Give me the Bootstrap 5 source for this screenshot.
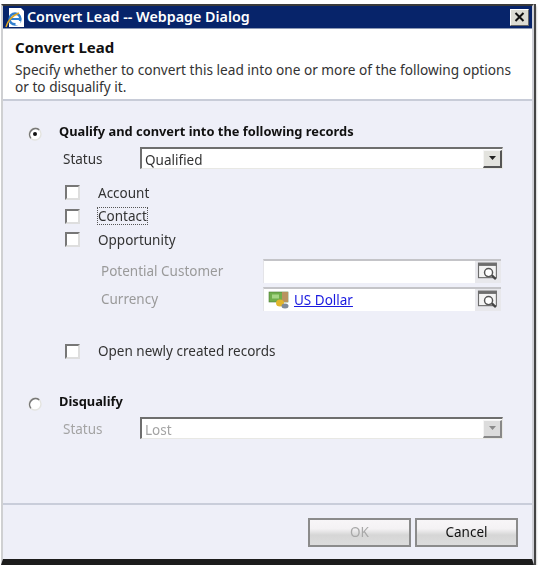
<!DOCTYPE html>
<html lang="en">
<head>
  <meta charset="UTF-8">
  <title>Convert Lead</title>
  <link href="https://cdn.jsdelivr.net/npm/bootstrap@5.3.2/dist/css/bootstrap.min.css" rel="stylesheet">
  <style>
    body {
      background: #fff;
      font-family: "Noto Sans", "DejaVu Sans", sans-serif;
      font-size: 13.5px;
      color: #333;
      line-height: 16px;
    }
    .dlg-window {
      width: 533px;
      height: 561px;
      margin: 4px 0 0 1px;
      background: #eeeff8;
      border-top: 2px solid #3a3a3a;
      border-right: 2px solid #cfd0d6;
      border-bottom: 6px solid #1c1c1c;
      border-left: 2px solid #cfd0d2;
      box-shadow: 2px 0 0 #444, 2px 2px 2px #999;
      filter: blur(.35px);
    }
    .dlg-title {
      height: 23px;
      background: #07246a;
      color: #fff;
      font-weight: 600;
      font-size: 14.3px;
      padding-left: 2px;
      padding-right: 3px;
      border-bottom: 1px solid #8d9ab5;
    }
    .dlg-title svg { margin-right: 1px; }
    .dlg-close {
      width: 19px;
      height: 17px;
      background: #dcdcd4;
      border: 1px solid #fff;
      border-right-color: #666;
      border-bottom-color: #666;
      color: #111;
    }
    .dlg-head {
      height: 72px;
      background: #fff;
      padding: 8px 12px 0;
      border-bottom: 2px solid #c8ccd8;
    }
    .dlg-head h1 {
      font-size: 15px;
      font-weight: 700;
      color: #111;
      line-height: 20px;
      margin: 0 0 5px;
    }
    .dlg-head p {
      margin: 0;
      line-height: 16.5px;
      font-size: 13.65px;
    }
    .dlg-body {
      height: 404px;
      padding: 20px 29px 0 25px;
      border-bottom: 2px solid #c9cdda;
    }
    .opt-head {
      font-weight: 700;
      font-size: 12.85px;
      color: #111;
      height: 20px;
    }
    .radio-mark {
      width: 14px;
      height: 14px;
      margin-top: 6px;
      margin-right: 17px;
      flex: none;
    }
    .field-row {
      padding-left: 35px;
      height: 22px;
      margin-top: 6px;
    }
    .field-name { width: 77px; flex: none; padding-top: 1px; }
    .muted-text { color: #a4a4a4; }
    .drop-box {
      width: 363px;
      height: 22px;
      flex: none;
      background: #fff;
      border: 2px solid #6e6e6e;
      border-right: 1px solid #e8e8e4;
      border-bottom: 1px solid #e8e8e4;
      padding-left: 3px;
    }
    .drop-box > span { padding-top: 3px; }
    .drop-arrow {
      width: 19px;
      height: 18px;
      margin-left: auto;
      background: #e3e3de;
      border: 1px solid #f5f5f5;
      border-right: 2px solid #555;
      border-bottom: 2px solid #555;
    }
    .drop-arrow.is-off {
      border-right-color: #888;
      border-bottom-color: #888;
      background: #dcdcdc;
    }
    .tick-list { margin-top: 12px; }
    .tick-row {
      padding-left: 37px;
      height: 23.5px;
    }
    .tick-box {
      width: 15px;
      height: 15px;
      margin-right: 18px;
      background: #fff;
      border: 2px solid #777;
      border-right-color: #dedede;
      border-bottom-color: #dedede;
      flex: none;
    }
    .dot-focus { outline: 1px dotted #555; }
    .lookup-list { margin-top: 5px; }
    .lookup-row {
      padding-left: 73px;
      height: 28px;
    }
    .lookup-name { width: 162px; flex: none; color: #9a9a9a; }
    .lookup-box {
      width: 238px;
      height: 24px;
      flex: none;
      background: #fff;
      border-top: 2px solid #c4c4c8;
      border-left: 1px solid #e4e4e8;
    }
    .lookup-val { width: 211px; height: 100%; padding-left: 4px; }
    .lookup-btn {
      width: 26px;
      height: 22px;
      background: #e8e8ec;
    }
    .lookup-val a { color: #1a1ae0; }
    .open-row { margin-top: 27px; }
    .disq-row { margin-top: 28px; }
    .dlg-foot { height: 54px; padding: 13px 14px 0 0; }
    .dlg-foot .btn {
      width: 103px;
      height: 29px;
      padding: 0;
      border: 2px solid #8b8b8b;
      border-radius: 0;
      background: linear-gradient(#f8f6f8, #f4f2f4 35%, #d6d6d6 60%, #dcdcdc);
      color: #111;
      font-size: 13.5px;
      opacity: 1;
    }
    .dlg-foot .btn:disabled { color: #a8a8a8; }
  </style>
</head>
<body>

<div class="dlg-window">
  <div class="dlg-title d-flex align-items-center">
    <svg width="21" height="21" viewBox="0 0 21 21">
      <path d="M4 1h12l3 3v16H4z" fill="#fff"/>
      <circle cx="10" cy="12" r="5.4" fill="none" stroke="#2f7fd0" stroke-width="2.6"/>
      <path d="M5 12h10" stroke="#2f7fd0" stroke-width="2"/>
      <path d="M15.5 14h-5v4h5z" fill="#fff"/>
      <path d="M1 20c2-7 8-12 13-14" fill="none" stroke="#e0a520" stroke-width="1.5"/>
    </svg>
    <span>Convert Lead -- Webpage Dialog</span>
    <div class="dlg-close ms-auto d-flex align-items-center justify-content-center">
      <svg width="11" height="10" viewBox="0 0 11 10"><path d="M1.5 1l8 8M9.5 1l-8 8" stroke="#111" stroke-width="2"/></svg>
    </div>
  </div>

  <div class="dlg-head">
    <h1>Convert Lead</h1>
    <p>Specify whether to convert this lead into one or more of the following options<br>or to disqualify it.</p>
  </div>

  <div class="dlg-body">
    <div class="opt-head d-flex align-items-center">
      <svg class="radio-mark" viewBox="0 0 14 14">
        <circle cx="7" cy="7" r="6" fill="#fff" stroke="#e4e4e0" stroke-width="1.4"/>
        <path d="M2.8 11.2A6 6 0 0 1 11.2 2.8" fill="none" stroke="#777" stroke-width="1.5"/>
        <circle cx="7" cy="7" r="2" fill="#111"/>
      </svg>
      <span>Qualify and convert into the following records</span>
    </div>
    <div class="field-row d-flex align-items-center">
      <span class="field-name">Status</span>
      <div class="drop-box d-flex align-items-center">
        <span>Qualified</span>
        <div class="drop-arrow d-flex align-items-center justify-content-center">
          <svg width="7" height="4" viewBox="0 0 7 4"><path d="M0 0h7L3.5 4z" fill="#222"/></svg>
        </div>
      </div>
    </div>

    <div class="tick-list">
      <div class="tick-row d-flex align-items-center"><span class="tick-box"></span><span>Account</span></div>
      <div class="tick-row d-flex align-items-center"><span class="tick-box"></span><span class="dot-focus">Contact</span></div>
      <div class="tick-row d-flex align-items-center"><span class="tick-box"></span><span>Opportunity</span></div>
    </div>

    <div class="lookup-list">
      <div class="lookup-row d-flex align-items-center">
        <span class="lookup-name">Potential Customer</span>
        <div class="lookup-box d-flex">
          <div class="lookup-val"></div>
          <div class="lookup-btn d-flex align-items-center justify-content-center">
            <svg width="22" height="19" viewBox="0 0 19 17">
              <rect x="1" y="1" width="16" height="13" fill="#f4f4f4" stroke="#6d6d6d"/>
              <rect x="1" y="1" width="16" height="2.5" fill="#6d6d6d"/>
              <circle cx="10" cy="9.5" r="3.6" fill="#fff" stroke="#555" stroke-width="1.3"/>
              <path d="M13 12l3.5 3.5" stroke="#444" stroke-width="2"/>
            </svg>
          </div>
        </div>
      </div>
      <div class="lookup-row d-flex align-items-center">
        <span class="lookup-name">Currency</span>
        <div class="lookup-box d-flex">
          <div class="lookup-val d-flex align-items-center">
            <svg width="22" height="18" viewBox="0 0 22 18" class="me-1">
              <rect x="1" y="1" width="19" height="10" fill="#6fae4c" stroke="#4c7a35" stroke-width=".6"/>
              <rect x="14" y="1" width="6" height="10" fill="#b9935f"/>
              <rect x="4" y="3.5" width="7" height="4" fill="#a5d584"/>
              <ellipse cx="12" cy="12" rx="4" ry="3.5" fill="#e2b52c"/>
              <ellipse cx="17" cy="15" rx="3.5" ry="2.5" fill="#7f8a99"/>
            </svg>
            <a href="#">US Dollar</a>
          </div>
          <div class="lookup-btn d-flex align-items-center justify-content-center">
            <svg width="22" height="19" viewBox="0 0 19 17">
              <rect x="1" y="1" width="16" height="13" fill="#f4f4f4" stroke="#6d6d6d"/>
              <rect x="1" y="1" width="16" height="2.5" fill="#6d6d6d"/>
              <circle cx="10" cy="9.5" r="3.6" fill="#fff" stroke="#555" stroke-width="1.3"/>
              <path d="M13 12l3.5 3.5" stroke="#444" stroke-width="2"/>
            </svg>
          </div>
        </div>
      </div>
    </div>

    <div class="tick-row d-flex align-items-center open-row">
      <span class="tick-box"></span><span>Open newly created records</span>
    </div>

    <div class="opt-head d-flex align-items-center disq-row">
      <svg class="radio-mark" viewBox="0 0 14 14">
        <circle cx="7" cy="7" r="6" fill="#fff" stroke="#e4e4e0" stroke-width="1.4"/>
        <path d="M2.8 11.2A6 6 0 0 1 11.2 2.8" fill="none" stroke="#777" stroke-width="1.5"/>
      </svg>
      <span>Disqualify</span>
    </div>
    <div class="field-row d-flex align-items-center">
      <span class="field-name muted-text">Status</span>
      <div class="drop-box d-flex align-items-center">
        <span class="muted-text">Lost</span>
        <div class="drop-arrow is-off d-flex align-items-center justify-content-center">
          <svg width="7" height="4" viewBox="0 0 7 4"><path d="M0 0h7L3.5 4z" fill="#8a8a8a"/></svg>
        </div>
      </div>
    </div>
  </div>

  <div class="dlg-foot d-flex justify-content-end gap-1">
    <button class="btn" disabled>OK</button>
    <button class="btn">Cancel</button>
  </div>
</div>

<script src="https://cdn.jsdelivr.net/npm/bootstrap@5.3.2/dist/js/bootstrap.bundle.min.js"></script>
</body>
</html>
